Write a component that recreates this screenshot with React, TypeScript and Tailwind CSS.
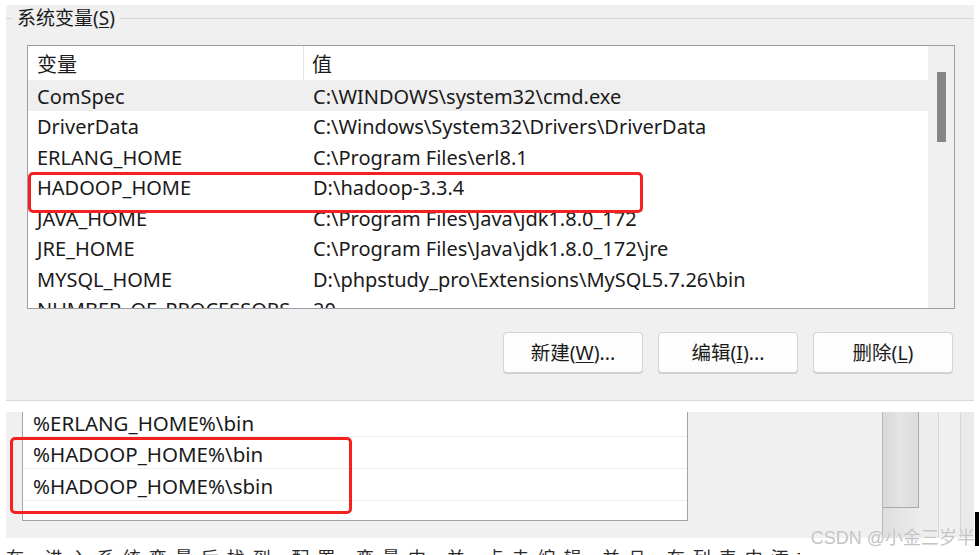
import React from "react";

const rows: [string, string][] = [
  ["ComSpec", "C:\\WINDOWS\\system32\\cmd.exe"],
  ["DriverData", "C:\\Windows\\System32\\Drivers\\DriverData"],
  ["ERLANG_HOME", "C:\\Program Files\\erl8.1"],
  ["HADOOP_HOME", "D:\\hadoop-3.3.4"],
  ["JAVA_HOME", "C:\\Program Files\\Java\\jdk1.8.0_172"],
  ["JRE_HOME", "C:\\Program Files\\Java\\jdk1.8.0_172\\jre"],
  ["MYSQL_HOME", "D:\\phpstudy_pro\\Extensions\\MySQL5.7.26\\bin"],
  ["NUMBER_OF_PROCESSORS", "20"],
];

const font = {
  fontFamily: '"Noto Sans", "Noto Sans CJK SC", sans-serif',
};

function Btn({ label, u, rest }: { label: string; u: string; rest: string }) {
  return (
    <div className="w-[140px] h-[41px] rounded-[4px] border border-[#d4d4d4] bg-[#fdfdfd] flex items-center justify-center text-[19.5px] text-[#1b1b1b] shadow-[0_1px_0_#cfcfcf]">
      <span>
        {label}(<span className="underline underline-offset-2">{u}</span>){rest}
      </span>
    </div>
  );
}

export default function App() {
  return (
    <div
      className="relative w-[979px] h-[555px] overflow-hidden bg-white text-[#1a1a1a]"
      style={font}
    >
      {/* top panel */}
      <div className="ml-[6px] mt-[5px] w-[968px] h-[396px] bg-[#f0f0f0] border-b border-[#d9d9d9] flex flex-col">
        <div className="flex items-center h-[24px] mt-[1px]">
          <div className="w-[6px] h-px bg-[#d6d6d6]" />
          <div className="px-[5px] text-[19px] leading-none text-[#1a1a1a]">
            系统变量(<span className="underline underline-offset-2">S</span>)
          </div>
          <div className="flex-1 h-px bg-[#d6d6d6]" />
        </div>

        <div className="ml-[21px] mt-[15px] w-[928px] h-[264px] border border-[#9a9ea6] bg-white flex">
          <div className="flex-1 flex flex-col overflow-hidden">
            <div className="h-[34px] flex text-[20px] shrink-0 pt-[3px]">
              <div className="w-[276px] border-r border-[#e5e5e5] pl-[9px] flex items-center -mt-[3px] pt-[3px]">变量</div>
              <div className="flex-1 pl-[8px] flex items-center">值</div>
            </div>
            {rows.map(([k, v], i) => (
              <div
                key={k}
                className={`h-[30.5px] shrink-0 flex items-center text-[20px] pt-[3px] ${
                  i === 0 ? "bg-[#efefef]" : ""
                }`}
              >
                <div className="w-[276px] pl-[9px] whitespace-nowrap overflow-hidden">{k}</div>
                <div className="flex-1 pl-[9px] whitespace-nowrap">{v}</div>
              </div>
            ))}
          </div>
          <div className="w-[26px] bg-[#f0f0f0] flex justify-center pt-[26px]">
            <div className="w-[9px] h-[70px] bg-[#858585] rounded-[1px]" />
          </div>
        </div>

        <div className="ml-[21px] w-[928px] mt-[23px] pr-[2px] flex justify-end gap-[15px]">
          <Btn label="新建" u="W" rest="..." />
          <Btn label="编辑" u="I" rest="..." />
          <Btn label="删除" u="L" rest="" />
        </div>
      </div>

      {/* bottom panel */}
      <div className="ml-[6px] mt-[11px] w-[968px] h-[126px] bg-[#f0f0f0] flex">
        <div className="ml-[16px] w-[666px] h-[109px] bg-white border-l border-r border-b border-[#a3a3a3] flex flex-col text-[20.5px]">
          <div className="h-[25px] border-b border-[#efefef] pl-[10px] flex items-center shrink-0">
            <span className="-mt-[2px]">%ERLANG_HOME%\bin</span>
          </div>
          <div className="h-[32px] border-b border-[#efefef] pl-[10px] pt-[3px] flex items-center shrink-0">
            %HADOOP_HOME%\bin
          </div>
          <div className="h-[32px] border-b border-[#efefef] pl-[10px] pt-[3px] flex items-center shrink-0">
            %HADOOP_HOME%\sbin
          </div>
          <div className="flex-1" />
        </div>
        <div className="ml-auto w-[92px] h-full flex">
          <div className="w-[37px] flex flex-col border-l border-[#b8b8b8]">
            <div className="h-[96px] border-r border-b border-[#a8a8a8] bg-gradient-to-r from-[#d9d9d9] via-[#e4e4e4] to-[#dcdcdc]" />
            <div className="flex-1 bg-gradient-to-r from-[#dedede] to-[#ececec]" />
          </div>
          <div className="w-[20px] bg-[#ededed] border-r border-[#d6d6d6]" />
          <div className="w-[22px] bg-[#f0f0f0] border-r border-[#d6d6d6]" />
          <div className="flex-1 bg-[#eaeaea]" />
        </div>
      </div>

      {/* bottom clipped text line */}
      <div className="h-[17px] w-[800px] overflow-hidden">
        <div className="mt-[7px] pl-[6px] text-[18px] whitespace-nowrap text-[#2a2a2a] tracking-[8px]">
          在 进入系统变量后找到 配置 变量中 并 点击编辑 并且 在列表中添加新的
        </div>
      </div>

      {/* overlays */}
      <div className="absolute left-[28px] top-[172px] w-[615px] h-[41px] border-[3px] border-[#f52020] rounded-[5px]" />
      <div className="absolute left-[10px] top-[437px] w-[342px] h-[77px] border-[3px] border-[#f52020] rounded-[5px]" />
      <div className="absolute right-[4px] top-[525px] text-[18px] text-[#c4c4c4] [text-shadow:0_0_1px_#ffffff]" style={{ fontFamily: '"Liberation Sans", "Noto Sans CJK SC", sans-serif' }}>
        CSDN @小金三岁半
      </div>
      <div className="absolute right-0 top-[512px] w-[4px] h-[34px] bg-black" />
    </div>
  );
}
